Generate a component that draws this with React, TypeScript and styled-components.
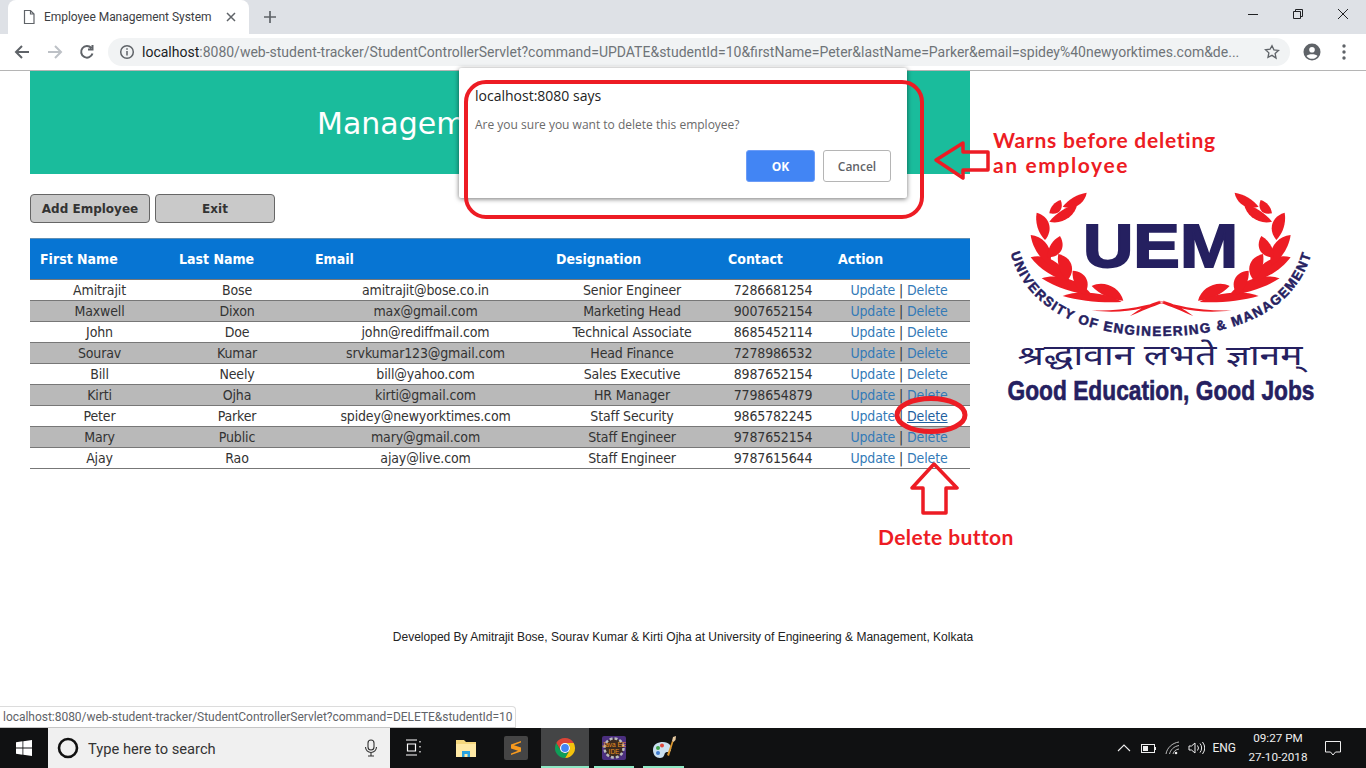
import React from "react";
import styled, { createGlobalStyle } from "styled-components";

const Global = createGlobalStyle`
  html, body { margin: 0; padding: 0; background: #fff; overflow: hidden; }
  * { box-sizing: border-box; }
`;
const Page = styled.div`
  width: 1366px; height: 768px; display: flex; flex-direction: column; position: relative; overflow: hidden;
  font-family: "DejaVu Sans Condensed", "DejaVu Sans", sans-serif;
`;
const TabStrip = styled.div`
  height: 34px; background: #dee1e6; display: flex; align-items: flex-end; padding-left: 8px; flex: none;
`;
const Tab = styled.div`
  width: 241px; height: 34px; background: #fff; border-radius: 8px 8px 0 0; display: flex; align-items: center;
  padding: 0 12px 0 14px; gap: 8px; font: 12px "Roboto", sans-serif; color: #3c4043;
`;
const TabTitle = styled.span` flex: 1; white-space: nowrap; letter-spacing: -0.04px; `;
const NewTab = styled.div` margin: 0 0 0 14px; height: 34px; display: flex; align-items: center; color: #5f6368; `;
const WinControls = styled.div` margin-left: auto; display: flex; align-self: flex-start; color: #202124; margin-right: 1px; `;
const WinBtn = styled.div` width: 45px; height: 28px; display: flex; align-items: center; justify-content: center; `;
const Toolbar = styled.div`
  height: 37px; background: #fff; border-bottom: 1px solid #b5b5b5; display: flex; align-items: center; flex: none; padding-left: 12px;
`;
const NavBtn = styled.div<{ $off?: boolean }>`
  width: 20px; height: 20px; margin-right: 12.500px; display: flex; align-items: center; justify-content: center;
  color: ${p => (p.$off ? "#bdc1c6" : "#5f6368")};
`;
const Omni = styled.div`
  margin-left: -1.500px; width: 1182px; height: 28px; background: #f1f3f4; border-radius: 14px; display: flex; align-items: center;
  padding: 0 10px 0 11px; gap: 7px; font: 14px "Roboto", sans-serif; white-space: nowrap; color: #6f7478;
`;
const Host = styled.span` color: #202124; `;
const UrlText = styled.span` flex: 1; overflow: hidden; `;
const ToolIcon = styled.div<{ $gap: number }>` display: flex; align-items: center; justify-content: center; margin-left: ${p => p.$gap}px; color: #5f6368; `;

const Body = styled.div` flex: 1; display: flex; min-height: 0; position: relative; `;
const Main = styled.main`
  width: 940px; margin-left: 30px; display: flex; flex-direction: column; flex: none;
`;
const Banner = styled.div`
  height: 103px; background: #1abc9c; color: #fff; display: flex; align-items: center; padding: 2px 0 0 287px;
  font: 30px "DejaVu Sans", sans-serif;
`;
const Buttons = styled.div` display: flex; gap: 5px; margin-top: 20px; `;
const Btn = styled.button`
  width: 120px; height: 29px; background: #c9c9c9; border: 1px solid #666; border-radius: 4px; color: #333;
  font: bold 12px "DejaVu Sans", sans-serif; padding: 0;
`;
const Table = styled.table`
  margin-top: 15px; width: 940px; table-layout: fixed; border-collapse: collapse; font-size: 14px; color: #333; letter-spacing: -0.14px;
`;
const Th = styled.th`
  height: 41px; background: #0775d3; color: #fff; text-align: left; padding: 0 0 0 10px; font: bold 14px "DejaVu Sans Condensed", "DejaVu Sans", sans-serif;
  letter-spacing: 0; border-top: 1px solid #5f8fb5; border-bottom: 1px solid #777;
`;
const Tr = styled.tr<{ $alt: boolean }>` background: ${p => (p.$alt ? "#b9b9b9" : "#fff")}; `;
const Td = styled.td`
  height: 21px; padding: 0; text-align: center; border-bottom: 1px solid #777; white-space: nowrap; line-height: 20px;
`;
const ActionLink = styled.a<{ $hover?: boolean }>`
  color: ${p => (p.$hover ? "#1f5f9f" : "#337ab7")}; text-decoration: ${p => (p.$hover ? "underline" : "none")}; cursor: pointer;
`;
const Footer = styled.footer`
  position: absolute; left: 0; right: 0; top: 559px; text-align: center; font: 12px "Liberation Sans", sans-serif; color: #222;
`;
const LogoWrap = styled.div` margin: 118px 0 0 33px; width: 320px; flex: none; `;

const Dialog = styled.div`
  position: absolute; left: 459px; top: 68px; width: 448px; height: 130px; background: #fff; border-radius: 2px;
  box-shadow: 0 1px 5px rgba(0,0,0,.55); padding: 19px 16px 0;
`;
const DlgTitle = styled.div` font: 14px "Open Sans", sans-serif; color: #222; line-height: 18px; margin-bottom: 11px; `;
const DlgMsg = styled.div` font: 12px "Open Sans", sans-serif; color: #6a6a6a; line-height: 17px; `;
const DlgBtns = styled.div` display: flex; justify-content: flex-end; gap: 8px; margin-top: 17px; `;
const DlgBtn = styled.button<{ $primary?: boolean }>`
  width: ${p => (p.$primary ? "69px" : "68px")}; height: 32px; border-radius: 3px; padding: 0;
  border: 1px solid ${p => (p.$primary ? "#6c9cf7" : "#b5b5b5")}; background: ${p => (p.$primary ? "#4285f4" : "#fff")};
  color: ${p => (p.$primary ? "#fff" : "#5f6368")}; font: ${p => (p.$primary ? "bold" : "600")} 12px "Open Sans", sans-serif;
`;
const Status = styled.div`
  position: absolute; left: 0; bottom: 40px; height: 22px; width: 516px; background: #fff; border: 1px solid #dcdcdc; border-left: 0; border-bottom: 1px solid #c6c6c6;
  border-top-right-radius: 4px; font: 12px "Roboto", sans-serif; color: #5f6368; padding: 3px 0 0 3px; white-space: nowrap; letter-spacing: -0.025px;
`;
const Overlay = styled.svg` position: absolute; left: 0; top: 0; width: 1366px; height: 768px; pointer-events: none; `;
const Note = styled.div`
  position: absolute; color: #ed1c24; font: bold 21px "Lato", sans-serif; line-height: 25px; white-space: nowrap; letter-spacing: .75px;
`;
const NoteTight = styled(Note)` letter-spacing: .4px; `;
const NoteWide = styled.span` letter-spacing: 1.600px; `;

const Taskbar = styled.div` height: 40px; flex: none; background: #101112; display: flex; align-items: stretch; color: #fff; position: relative; z-index: 1; `;
const StartBtn = styled.div` width: 48px; display: flex; align-items: center; justify-content: center; `;
const Search = styled.div`
  width: 342px; background: #f0f0f0; display: flex; align-items: center; padding: 0 12px 0 9px; gap: 9px; color: #333;
  font: 14.700px "Roboto", sans-serif;
`;
const SearchText = styled.span` flex: 1; padding-top: 1px; `;
const TaskIcons = styled.div` display: flex; `;
const TaskIcon = styled.div<{ $w?: number; $gap?: number; $active?: boolean; $inset?: number }>`
  width: ${p => p.$w ?? 48}px; margin-right: ${p => p.$gap ?? 0}px; display: flex; align-items: center; justify-content: center; position: relative;
  background: ${p => (p.$active ? "#444546" : "transparent")};
  ${p => p.$inset !== undefined ? `&::after { content: ""; position: absolute; left: ${p.$inset}px; right: ${p.$inset}px; bottom: 0; height: 2px; background: #8ee8c4; }` : ""}
`;
const Tray = styled.div` margin-left: auto; display: flex; align-items: center; color: #eee; font: 12px "Roboto", sans-serif; `;
const TrayIcon = styled.div<{ $gap: number }>` display: flex; align-items: center; justify-content: center; margin-right: ${p => p.$gap}px; `;
const Clock = styled.div` width: 66px; margin-left: 9px; text-align: center; line-height: 19px; font-size: 11.700px; `;
const Notif = styled.div` width: 44px; display: flex; justify-content: center; margin-right: 11px; `;

const rows = [
  ["Amitrajit", "Bose", "amitrajit@bose.co.in", "Senior Engineer", "7286681254"],
  ["Maxwell", "Dixon", "max@gmail.com", "Marketing Head", "9007652154"],
  ["John", "Doe", "john@rediffmail.com", "Technical Associate", "8685452114"],
  ["Sourav", "Kumar", "srvkumar123@gmail.com", "Head Finance", "7278986532"],
  ["Bill", "Neely", "bill@yahoo.com", "Sales Executive", "8987652154"],
  ["Kirti", "Ojha", "kirti@gmail.com", "HR Manager", "7798654879"],
  ["Peter", "Parker", "spidey@newyorktimes.com", "Staff Security", "9865782245"],
  ["Mary", "Public", "mary@gmail.com", "Staff Engineer", "9787652154"],
  ["Ajay", "Rao", "ajay@live.com", "Staff Engineer", "9787615644"],
];
const heads: [string, number][] = [["First Name", 139], ["Last Name", 136], ["Email", 241], ["Designation", 172], ["Contact", 110], ["Action", 142]];

/* leaf between two points, given in a 1024-wide drawing space; bulges to one side */
const Leaf = ({ a, b, w }: { a: [number, number]; b: [number, number]; w: number }) => {
  const dx = b[0] - a[0], dy = b[1] - a[1];
  const len = Math.hypot(dx, dy);
  const nx = -dy / len, ny = dx / len;
  const pt = (t: number, s: number) => `${a[0] + dx * t + nx * s} ${a[1] + dy * t + ny * s}`;
  return <path d={`M${a[0]} ${a[1]} C${pt(.25, w)} ${pt(.75, w)} ${b[0]} ${b[1]} C${pt(.7, -w * .4)} ${pt(.3, -w * .4)} ${a[0]} ${a[1]}Z`} fill="#ed1c24" />;
};
const leaves: [[number, number], [number, number], number][] = [
  [[400, 362], [305, 318], 32],
  [[395, 366], [218, 348], 24],
  [[305, 345], [155, 295], 32],
  [[282, 344], [248, 272], 36],
  [[235, 305], [122, 232], 38],
  [[232, 302], [205, 222], 36],
  [[178, 256], [122, 165], 36],
  [[172, 232], [210, 168], 34],
  [[165, 180], [140, 98], 34],
  [[178, 125], [262, 72], 28],
  [[178, 100], [212, 60], 26],
  [[218, 80], [290, 38], 26],
];
const half = <g>{leaves.map(([a, b, w], i) => <Leaf key={i} a={a} b={b} w={w} />)}</g>;

const Logo = () => (
  <svg width="320" height="220" viewBox="0 0 320 220">
    <defs>
      <path id="uemArc" d="M3 35 C 6 108, 62 147, 158 147 C 254 147, 310 108, 313 35" fill="none" />
    </defs>
    <g transform="translate(-13 -9) scale(.3333)">
      {half}
      <g transform="translate(1024 0) scale(-1 1)">{half}</g>
      <path d="M305 391 C 400 395, 470 375, 525 362 C 480 382, 400 405, 305 391Z M725 391 C 630 395, 560 375, 505 362 C 550 382, 630 405, 725 391Z M420 408 C 450 385, 480 370, 510 362 L 520 368 C 490 378, 450 395, 420 408Z M610 408 C 580 385, 550 370, 520 362 L 510 368 C 540 378, 580 395, 610 408Z" fill="#ed1c24" />
    </g>
    <text x="157.500" y="78" textAnchor="middle" fontFamily="Liberation Sans, sans-serif" fontWeight="bold" fontSize="62" fill="#252060" stroke="#252060" strokeWidth="1.800" textLength="155" lengthAdjust="spacingAndGlyphs">UEM</text>
    <text fontFamily="Liberation Sans, sans-serif" fontWeight="bold" fontSize="13.500" fill="#252060" stroke="#252060" strokeWidth=".5" letterSpacing="1.400">
      <textPath href="#uemArc" startOffset="50%" textAnchor="middle">UNIVERSITY OF ENGINEERING &amp; MANAGEMENT</textPath>
    </text>
    <text x="157" y="176" textAnchor="middle" fontFamily="Noto Sans, sans-serif" fontSize="28" fill="#252060" textLength="285" lengthAdjust="spacingAndGlyphs">श्रद्धावान लभते ज्ञानम्</text>
    <text x="158" y="210.500" textAnchor="middle" fontFamily="Liberation Sans, sans-serif" fontWeight="bold" fontSize="27" fill="#252060" stroke="#252060" strokeWidth=".6" textLength="307" lengthAdjust="spacingAndGlyphs">Good Education, Good Jobs</text>
  </svg>
);

const ChromeLogo = () => (
  <svg width="22" height="22" viewBox="0 0 48 48">
    <path d="M43.050 13A22 22 0 0 0 4.950 13L14.470 29.500A11 11 0 0 1 24 13Z" fill="#db4437" />
    <path d="M43.050 13A22 22 0 0 1 24 46L33.530 29.500A11 11 0 0 0 24 13Z" fill="#f4c20d" />
    <path d="M24 46A22 22 0 0 1 4.950 13L14.470 29.500A11 11 0 0 0 33.530 29.500Z" fill="#0f9d58" />
    <circle cx="24" cy="24" r="11" fill="#fff" /><circle cx="24" cy="24" r="8.500" fill="#4285f4" />
  </svg>
);

export default function App() {
  return (
    <Page>
      <Global />
      <TabStrip>
        <Tab>
          <svg width="14" height="16" viewBox="0 0 14 16" fill="none" stroke="#5f6368" strokeWidth="1.200"><path d="M2.500 1.500h6l3.500 3.500v9.500h-9.500zM8.500 1.500v3.500h3.500" /></svg>
          <TabTitle>Employee Management System</TabTitle>
          <svg width="12" height="12" viewBox="0 0 12 12" stroke="#5f6368" strokeWidth="1.500"><path d="M2 2l8 8M10 2l-8 8" /></svg>
        </Tab>
        <NewTab><svg width="14" height="14" viewBox="0 0 14 14" stroke="currentColor" strokeWidth="1.700"><path d="M7 1v12M1 7h12" /></svg></NewTab>
        <WinControls>
          <WinBtn><svg width="10" height="10" viewBox="0 0 10 10" stroke="currentColor"><path d="M0 5.500h10" /></svg></WinBtn>
          <WinBtn><svg width="10" height="10" viewBox="0 0 10 10" fill="none" stroke="currentColor"><path d="M.5 2.500h7v7h-7zM2.500 2.500v-2h7v7h-2" /></svg></WinBtn>
          <WinBtn><svg width="10" height="10" viewBox="0 0 10 10" stroke="currentColor"><path d="M0 0l10 10M10 0L0 10" /></svg></WinBtn>
        </WinControls>
      </TabStrip>
      <Toolbar>
        <NavBtn><svg width="16" height="16" viewBox="0 0 16 16" fill="none" stroke="currentColor" strokeWidth="2"><path d="M15 8H2M8 2L2 8l6 6" /></svg></NavBtn>
        <NavBtn $off><svg width="16" height="16" viewBox="0 0 16 16" fill="none" stroke="currentColor" strokeWidth="2"><path d="M1 8h13M8 2l6 6-6 6" /></svg></NavBtn>
        <NavBtn><svg width="16" height="16" viewBox="0 0 16 16" fill="none" stroke="currentColor" strokeWidth="2"><path d="M13.500 9.500A5.800 5.800 0 1 1 12.300 4M13.500 1v4.500H9" /></svg></NavBtn>
        <Omni>
          <svg width="16" height="16" viewBox="0 0 16 16" fill="none" stroke="#5f6368" strokeWidth="1.500"><circle cx="8" cy="8" r="6.300" /><path d="M8 7v4.500M8 4.200v1.500" /></svg>
          <UrlText><Host>localhost</Host>:8080/web-student-tracker/StudentControllerServlet?command=UPDATE&amp;studentId=10&amp;firstName=Peter&amp;lastName=Parker&amp;email=spidey%40newyorktimes.com&amp;de...</UrlText>
          <svg width="16" height="16" viewBox="0 0 24 24" fill="none" stroke="#5f6368" strokeWidth="2"><path d="M12 2.500l2.900 6.300 6.800.8-5 4.700 1.300 6.800L12 17l-6 3.100 1.300-6.800-5-4.700 6.800-.8z" /></svg>
        </Omni>
        <ToolIcon $gap={13}>
          <svg width="18" height="18" viewBox="0 0 18 18"><circle cx="9" cy="9" r="8.500" fill="#5f6368" /><circle cx="9" cy="6.800" r="2.800" fill="#fff" /><path d="M3.500 13c1.500-2.500 9.500-2.500 11 0-1.500 2-3.500 2.800-5.500 2.800S5 15 3.500 13z" fill="#fff" /></svg>
        </ToolIcon>
        <ToolIcon $gap={21}>
          <svg width="4" height="16" viewBox="0 0 4 16" fill="#5f6368"><circle cx="2" cy="2" r="1.700" /><circle cx="2" cy="8" r="1.700" /><circle cx="2" cy="14" r="1.700" /></svg>
        </ToolIcon>
      </Toolbar>
      <Body>
        <Main>
          <Banner>Management System</Banner>
          <Buttons><Btn>Add Employee</Btn><Btn>Exit</Btn></Buttons>
          <Table>
            <colgroup>{heads.map(([h, w]) => <col key={h} width={w} />)}</colgroup>
            <thead><tr>{heads.map(([h]) => <Th key={h}>{h}</Th>)}</tr></thead>
            <tbody>
              {rows.map((r, i) => (
                <Tr key={r[0]} $alt={i % 2 === 1}>
                  {r.map((c, j) => <Td key={j}>{c}</Td>)}
                  <Td><ActionLink>Update</ActionLink> | <ActionLink $hover={i === 6}>Delete</ActionLink></Td>
                </Tr>
              ))}
            </tbody>
          </Table>
        </Main>
        <LogoWrap><Logo /></LogoWrap>
        <Footer>Developed By Amitrajit Bose, Sourav Kumar &amp; Kirti Ojha at University of Engineering &amp; Management, Kolkata</Footer>
      </Body>
      <Dialog>
        <DlgTitle>localhost:8080 says</DlgTitle>
        <DlgMsg>Are you sure you want to delete this employee?</DlgMsg>
        <DlgBtns><DlgBtn $primary>OK</DlgBtn><DlgBtn>Cancel</DlgBtn></DlgBtns>
      </Dialog>
      <Overlay viewBox="0 0 1366 768" fill="none" stroke="#ed1c24" strokeWidth="4">
        <rect x="466" y="82" width="456" height="135" rx="20" />
        <path d="M988 152H963V143L936 160L963 178V170H988Z" strokeWidth="3.500" strokeLinejoin="round" />
        <ellipse cx="931" cy="415" rx="34" ry="16.500" strokeWidth="5" />
        <path d="M934 464L957 488H946V513H923V488H912Z" strokeWidth="3.500" strokeLinejoin="round" />
      </Overlay>
      <Note style={{ left: 993, top: 127 }}>Warns before deleting<br /><NoteWide>an employee</NoteWide></Note>
      <NoteTight style={{ left: 878, top: 524 }}>Delete button</NoteTight>
      <Status>localhost:8080/web-student-tracker/StudentControllerServlet?command=DELETE&amp;studentId=10</Status>
      <Taskbar>
        <StartBtn><svg width="16" height="16" viewBox="0 0 16 16" fill="#fff"><path d="M0 2.200l6.500-.9v6.200H0zM7.300 1.200L16 0v7.500H7.300zM0 8.500h6.500v6.200L0 13.800zM7.300 8.500H16V16l-8.700-1.200z" /></svg></StartBtn>
        <Search>
          <svg width="22" height="22" viewBox="0 0 22 22" fill="none" stroke="#111" strokeWidth="2.600"><circle cx="11" cy="11" r="9" /></svg>
          <SearchText>Type here to search</SearchText>
          <svg width="14" height="18" viewBox="0 0 14 18" fill="none" stroke="#333" strokeWidth="1.100"><rect x="4" y="1" width="6" height="10" rx="3" /><path d="M1.500 8a5.500 5.500 0 0 0 11 0M7 13.500V17M4 17h6" /></svg>
        </Search>
        <TaskIcons>
          <TaskIcon $gap={4}><svg width="18" height="18" viewBox="0 0 18 18" fill="none" stroke="#fff" strokeWidth="1.200"><path d="M1 1h11M1 16h11M2.500 5h8v7h-8zM15 2v1.500M15 7v1.500M15 12v1.500" /></svg></TaskIcon>
          <TaskIcon $gap={2}><svg width="22" height="22" viewBox="0 0 22 22"><path d="M1 3h8l2 2h10v15H1z" fill="#f5d77d" /><path d="M1 7h20v13H1z" fill="#ffe9a5" /><path d="M7 20v-6h8v6h-2.500v-3h-3v3z" fill="#29a3e0" /></svg></TaskIcon>
          <TaskIcon $gap={1}><svg width="24" height="24" viewBox="0 0 24 24"><rect width="24" height="24" rx="2" fill="#454545" /><path d="M17 5L7 8.500v4l7 2.200-7 2.800 0 1.500 10-3.500v-4l-7-2.200 7-2.700z" fill="#f79a1e" /></svg></TaskIcon>
          <TaskIcon $active $inset={0}><ChromeLogo /></TaskIcon>
          <TaskIcon $w={50} $inset={5}><svg width="24" height="24" viewBox="0 0 24 24"><rect width="24" height="24" rx="2" fill="#4b2f7f" /><circle cx="12" cy="12" r="9.500" fill="#3a2a20" stroke="#bbb" strokeWidth="2.500" strokeDasharray="3 2" /><text x="12" y="11" textAnchor="middle" fontFamily="Liberation Sans, sans-serif" fontSize="6.500" fill="#e8901f">Java EE</text><text x="12" y="18" textAnchor="middle" fontFamily="Liberation Sans, sans-serif" fontSize="6.500" fill="#e8901f">IDE</text></svg></TaskIcon>
          <TaskIcon $w={49} $inset={4}><svg width="26" height="26" viewBox="0 0 26 26"><path d="M2 15c0-6 5-8 10-8 6 0 9 4 8 8-1 3-4 1-6 3-1 2-1 5-5 5-4 0-7-3-7-8z" fill="#c9dff0" /><circle cx="7" cy="13" r="2" fill="#3fa34d" /><circle cx="11" cy="10.500" r="2" fill="#e0463b" /><circle cx="7" cy="18" r="2" fill="#3f7bd0" /><path d="M16 20L21 6l1.500.5L18 21z" fill="#d9962f" /><path d="M21 6l1-4 3-1-.5 4-2 2z" fill="#e6c9a0" /></svg></TaskIcon>
        </TaskIcons>
        <Tray>
          <TrayIcon $gap={10}><svg width="14" height="8" viewBox="0 0 14 8" fill="none" stroke="#eee" strokeWidth="1.100"><path d="M1 7l6-6 6 6" /></svg></TrayIcon>
          <TrayIcon $gap={9}><svg width="15" height="9" viewBox="0 0 15 9"><rect x=".5" y=".5" width="13" height="8" fill="none" stroke="#eee" /><rect x="2" y="2" width="5" height="5" fill="#eee" /><rect x="14" y="3" width="1" height="3" fill="#eee" /></svg></TrayIcon>
          <TrayIcon $gap={7}><svg width="16" height="14" viewBox="0 0 16 14" fill="none" stroke="#bbb"><path d="M1 13C2 7 7 2 14 1M4.500 13C5.500 9 8.500 5.500 14 4.500M8 13c.5-2.500 2.500-4.500 6-5" /><circle cx="11" cy="12" r="1.300" fill="#eee" stroke="none" /></svg></TrayIcon>
          <TrayIcon $gap={7}><svg width="17" height="14" viewBox="0 0 17 14" fill="none" stroke="#eee"><path d="M1 5v4h2.500L7 12V2L3.500 5zM9.500 4.500a4 4 0 0 1 0 5M12 2.500a7 7 0 0 1 0 9M14.500 1a10 10 0 0 1 0 12" /></svg></TrayIcon>
          <span>ENG</span>
          <Clock>09:27 PM<br />27-10-2018</Clock>
          <Notif><svg width="16" height="15" viewBox="0 0 16 15" fill="none" stroke="#eee"><path d="M.5.500h15v10.500h-5l-2.500 3-2.500-3h-5z" /></svg></Notif>
        </Tray>
      </Taskbar>
    </Page>
  );
}
